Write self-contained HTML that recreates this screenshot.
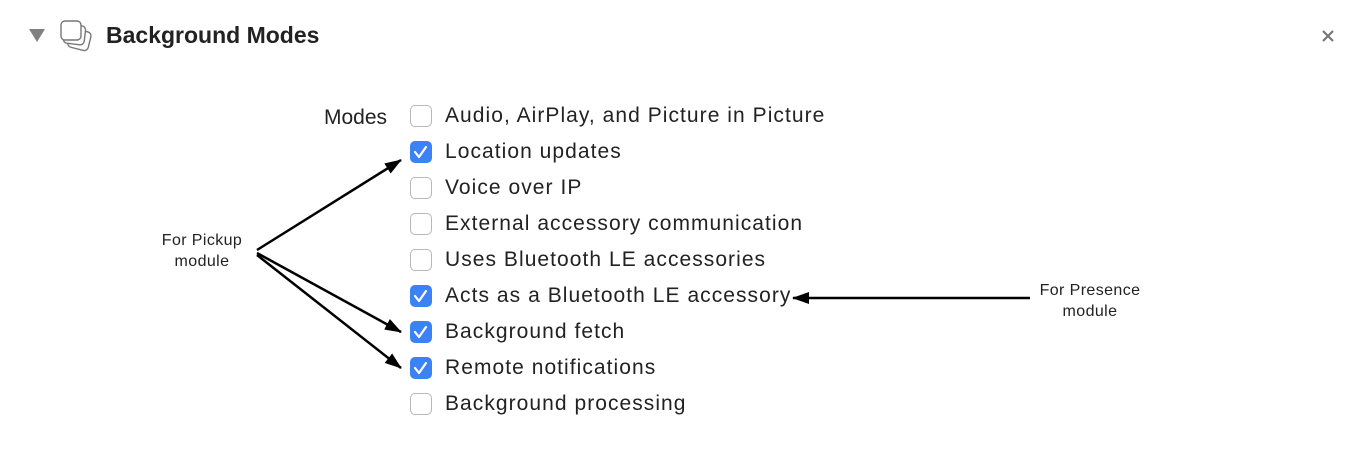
<!DOCTYPE html>
<html><head><style>
body{margin:0;width:1364px;height:450px;background:#fff;font-family:"Liberation Sans",sans-serif;position:relative;overflow:hidden}
.a{position:absolute}
.cb{position:absolute;left:410px;width:22px;height:22px;border:1px solid #b8b8b8;border-radius:5px;background:#fff;box-sizing:border-box}
.cb.on{background:#3b82f6;border-color:#3b82f6}
.lbl{position:absolute;left:445px;font-size:21px;color:#222;line-height:24px;letter-spacing:1.05px}
.note{position:absolute;font-size:16px;color:#222;text-align:center;line-height:21px;letter-spacing:0.4px}
</style></head><body>
<svg class="a" style="left:28px;top:28px" width="20" height="16"><polygon points="1,1 17,1 9,14" fill="#808080"/></svg>
<svg class="a" style="left:58px;top:18px" width="40" height="38" fill="#fff" stroke="#777" stroke-width="1.4">
<rect x="11" y="12" width="21" height="19" rx="4" transform="rotate(14 21 21)"/>
<rect x="6" y="7" width="21" height="19" rx="4" transform="rotate(7 16 16)"/>
<rect x="3" y="3" width="20" height="19" rx="4"/></svg>
<div class="a" style="left:106px;top:22px;font-size:23px;font-weight:bold;color:#222">Background Modes</div>
<svg class="a" style="left:1321px;top:29px" width="14" height="14" stroke="#777" stroke-width="2.2"><path d="M2 2L12 12M12 2L2 12"/></svg>
<div class="a" style="left:324px;top:106px;font-size:21px;color:#222">Modes</div>

<div class="cb" style="top:105px"></div><div class="lbl" style="top:104px">Audio, AirPlay, and Picture in Picture</div>
<div class="cb on" style="top:141px"></div><div class="lbl" style="top:140px">Location updates</div>
<div class="cb" style="top:177px"></div><div class="lbl" style="top:176px">Voice over IP</div>
<div class="cb" style="top:213px"></div><div class="lbl" style="top:212px">External accessory communication</div>
<div class="cb" style="top:249px"></div><div class="lbl" style="top:248px">Uses Bluetooth LE accessories</div>
<div class="cb on" style="top:285px"></div><div class="lbl" style="top:284px">Acts as a Bluetooth LE accessory</div>
<div class="cb on" style="top:321px"></div><div class="lbl" style="top:320px">Background fetch</div>
<div class="cb on" style="top:357px"></div><div class="lbl" style="top:356px">Remote notifications</div>
<div class="cb" style="top:393px"></div><div class="lbl" style="top:392px">Background processing</div>

<svg class="a" style="left:0;top:0" width="1364" height="450">
<g fill="none" stroke="#fff" stroke-width="2.2" stroke-linecap="round" stroke-linejoin="round">
<path d="M415 152l4 5 7-10"/><path d="M415 296l4 5 7-10"/><path d="M415 332l4 5 7-10"/><path d="M415 368l4 5 7-10"/></g>
<defs><marker id="m" markerWidth="18" markerHeight="12" refX="16" refY="6" orient="auto" markerUnits="userSpaceOnUse"><path d="M0 0L17 6L0 12z" fill="#000"/></marker></defs>
<g stroke="#000" stroke-width="2.5" marker-end="url(#m)">
<line x1="257" y1="250" x2="401" y2="160"/>
<line x1="257" y1="253" x2="401" y2="332"/>
<line x1="257" y1="255" x2="401" y2="368"/>
<line x1="1030" y1="298" x2="793" y2="298"/></g>
</svg>
<div class="note" style="left:132px;top:230px;width:140px">For Pickup<br>module</div>
<div class="note" style="left:1015px;top:280px;width:150px">For Presence<br>module</div>
</body></html>
